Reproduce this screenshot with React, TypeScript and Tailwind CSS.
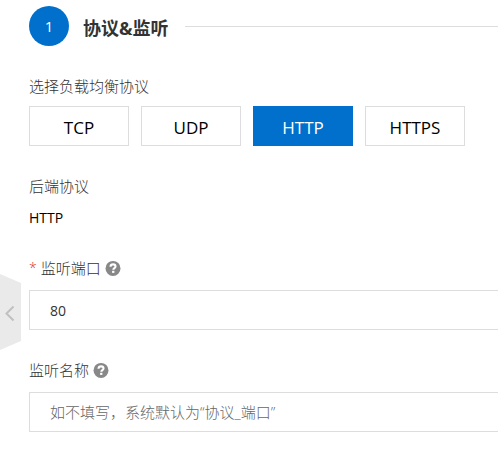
import React, { useState } from 'react';

const protocols = ['TCP', 'UDP', 'HTTP', 'HTTPS'];

const HelpIcon = () => (
  <svg viewBox="0 0 16 16" className="w-4 h-4 shrink-0" aria-hidden="true">
    <circle cx="8" cy="8.4" r="7.5" fill="#888888" />
    <path
      d="M5.5 6.7C5.6 5.1 6.6 4.4 8.1 4.4c1.5 0 2.4.8 2.4 2 0 1.7-2.2 1.7-2.2 3.4"
      fill="none"
      stroke="#ffffff"
      strokeWidth="2.1"
    />
    <rect x="7.1" y="10.8" width="2.3" height="2.1" fill="#ffffff" />
  </svg>
);

const ListenerForm = () => {
  const [protocol, setProtocol] = useState('HTTP');
  const [port, setPort] = useState('80');
  const [name, setName] = useState('');

  return (
    <div className="relative min-h-screen overflow-hidden bg-white pt-[6px] pb-4 pl-[29px] font-['Open_Sans','Noto_Sans_CJK_SC',sans-serif] text-[15px] leading-5 font-light text-[#333333]">
      {/* Collapse handle */}
      <button
        type="button"
        aria-label="collapse"
        className="absolute left-0 top-[274px] w-[21px] h-[76px]"
      >
        <svg viewBox="0 0 21 76" className="w-full h-full">
          <path d="M0 0L21 9V67L0 76Z" fill="#eaeaea" />
          <path d="M13.5 32.5L6.5 39.5L13.5 46.5" fill="none" stroke="#c0c0c0" strokeWidth="2" />
        </svg>
      </button>

      {/* Step Header */}
      <div className="flex items-center">
        <span className="flex items-center justify-center w-10 h-10 rounded-full bg-[#0070cc] font-normal text-white">
          1
        </span>
        <h2 className="ml-[14px] pt-1 text-lg leading-6 font-bold text-[#333333]">协议&amp;监听</h2>
        <div className="ml-4 flex-1 border-t border-[#dddddd]" />
      </div>

      {/* Protocol */}
      <div className="mt-[30px]" role="group" aria-labelledby="protocol-label">
        <p id="protocol-label">选择负载均衡协议</p>
        <div className="mt-[10px] flex gap-3">
          {protocols.map((item) => (
            <button
              key={item}
              type="button"
              aria-pressed={protocol === item}
              onClick={() => setProtocol(item)}
              className={`${
                protocol === item
                  ? 'border-[#0070cc] bg-[#0070cc] text-white'
                  : 'border-[#dddddd] bg-white text-black'
              } w-[100px] h-10 pt-1 border text-[17px] font-normal`}
            >
              {item}
            </button>
          ))}
        </div>
      </div>

      {/* Backend Protocol */}
      <div className="mt-[30px]">
        <p>后端协议</p>
        <p className="mt-3 text-sm font-normal text-black">HTTP</p>
      </div>

      {/* Port */}
      <div className="mt-[30px]">
        <label htmlFor="port" className="flex items-center">
          <span className="mr-1 text-sm text-[#d93026]">*</span>
          监听端口
          <span className="ml-1">
            <HelpIcon />
          </span>
        </label>
        <input
          id="port"
          type="text"
          value={port}
          onChange={(e) => setPort(e.target.value)}
          className="mt-3 block w-full h-10 border border-r-0 border-[#dddddd] px-5 text-sm font-normal text-[#333333] outline-none"
        />
      </div>

      {/* Name */}
      <div className="mt-[30px]">
        <label htmlFor="name" className="flex items-center">
          监听名称
          <span className="ml-1">
            <HelpIcon />
          </span>
        </label>
        <input
          id="name"
          type="text"
          value={name}
          placeholder="如不填写，系统默认为“协议_端口”"
          onChange={(e) => setName(e.target.value)}
          className="mt-3 block w-full h-10 border border-r-0 border-[#dddddd] px-5 text-[#333333] placeholder:text-[#666666] outline-none"
        />
      </div>
    </div>
  );
};

export default ListenerForm;
